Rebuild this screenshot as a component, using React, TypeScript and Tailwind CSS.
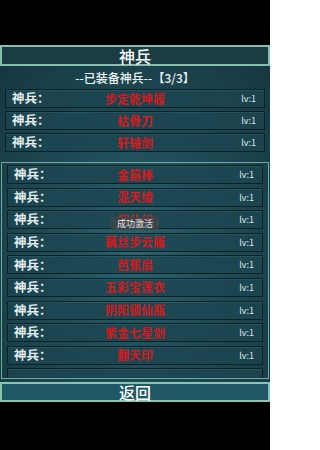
import React from "react";

const top = ["步定乾坤履", "枯骨刀", "轩辕剑"];
const list = ["金箍棒", "混天绫", "捆仙绳", "藕丝步云履", "芭蕉扇", "五彩宝莲衣", "阴阳锁仙瓶", "紫金七星剑", "翻天印"];

function Row({ name, empty }: { name: string; empty?: boolean }) {
  return (
    <div className="h-[19px] shrink-0 mx-[5px] grid grid-cols-[1fr_auto_1fr] items-center pl-[6px] pr-[6px] border border-[#0b2227] bg-[#1b4550]/80 shadow-[inset_0_1px_0_rgba(120,170,170,0.15)]">
      {empty ? null : (
        <>
          <span className="text-[12.5px] leading-none font-bold text-[#e6eef0] whitespace-nowrap">
            神兵<span className="inline-block w-[6px] overflow-visible">：</span>
          </span>
          <span className="text-[12px] leading-none font-bold text-[#d8191c]">{name}</span>
          <span className="justify-self-end text-[9px] leading-none text-[#dfe8ea] pr-[2px]">lv:1</span>
        </>
      )}
    </div>
  );
}

export default function App() {
  return (
    <div
      className="w-[270px] h-[450px] bg-black flex flex-col relative overflow-hidden"
      style={{ fontFamily: '"Noto Sans CJK SC", "Noto Sans", sans-serif' }}
    >
      <div className="h-[45px] shrink-0" />
      <div className="h-[21px] shrink-0 border-2 border-[#86bfae] bg-[#1a3c43] flex items-center justify-center text-[16px] leading-none text-white font-medium">
        神兵
      </div>
      <div className="flex-1 flex flex-col bg-[radial-gradient(ellipse_at_50%_55%,#2b6470_0%,#1f4c57_45%,#163740_100%)]">
        <div className="h-[23px] shrink-0 flex items-center justify-center text-[12px] leading-none text-[#eef3f4] font-medium">
          --已装备神兵--【3/3】
        </div>
        <div className="flex flex-col gap-[3px]">
          {top.map((n) => (
            <Row key={n} name={n} />
          ))}
        </div>
        <div className="mt-[10px] mx-[1px] h-[217px] shrink-0 border-[1.5px] border-[#6fa999] overflow-hidden pt-[2px] flex flex-col gap-[3.6px]">
          {list.map((n) => (
            <Row key={n} name={n} />
          ))}
          <Row name="" empty />
        </div>
        <div className="mt-[3px] h-[20px] shrink-0 border-2 border-[#8cc2b2] bg-[#1f5864] flex items-center justify-center text-[16px] leading-none text-white font-medium">
          返回
        </div>
      </div>
      <div className="h-[48px] shrink-0" />
      <div className="absolute left-[111px] top-[217px] w-[48px] h-[13px] bg-[#3c4649]/85 flex items-center justify-center text-[9px] leading-none text-[#e4e8e9]">
        成功激活
      </div>
    </div>
  );
}
